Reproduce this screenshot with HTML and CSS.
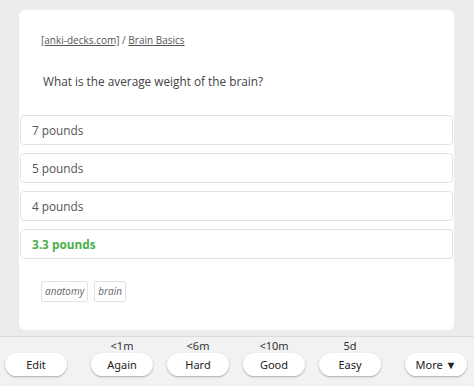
FILE: index.html
```html
<!DOCTYPE html>
<html lang="en">
<head>
    <meta charset="UTF-8">
    <title>Anki Review</title>
    <link rel="stylesheet" href="styles.css">
</head>
<body>
    <div class="page">
        <div class="card">
            <div class="crumbs"><u>[anki-decks.com]</u> / <u>Brain Basics</u></div>
            <div class="question">What is the average weight of the brain?</div>

            <div class="answers">
                <div class="answer">7 pounds</div>
                <div class="answer">5 pounds</div>
                <div class="answer">4 pounds</div>
                <div class="answer correct">3.3 pounds</div>
            </div>

            <div class="tags">
                <span class="tag">anatomy</span>
                <span class="tag">brain</span>
            </div>
        </div>
    </div>

    <div class="bar">
        <div class="col"><button class="btn">Edit</button></div>
        <div class="ease">
            <div class="col"><span class="due">&lt;1m</span><button class="btn">Again</button></div>
            <div class="col"><span class="due">&lt;6m</span><button class="btn">Hard</button></div>
            <div class="col"><span class="due">&lt;10m</span><button class="btn">Good</button></div>
            <div class="col"><span class="due">5d</span><button class="btn">Easy</button></div>
        </div>
        <div class="col"><button class="btn">More &#9660;</button></div>
    </div>
</body>
</html>
```

FILE: styles.css
```css
* {
    margin: 0;
    padding: 0;
    box-sizing: border-box;
}

html, body {
    height: 100%;
}

body {
    font-family: 'Open Sans', 'Noto Sans', sans-serif;
    background: #ececec;
    color: #555;
    display: flex;
    flex-direction: column;
}

.page {
    flex: 1;
    padding: 10px 20px 0 19px;
}

.card {
    background: #fff;
    height: 320px;
    border-radius: 6px;
    padding: 22px 1px 0;
}

.crumbs {
    font-size: 10px;
    line-height: 16px;
    padding-left: 21px;
    color: #555;
}

.question {
    font-size: 11.8px;
    line-height: 18px;
    margin-top: 24px;
    padding-left: 23px;
    color: #444;
}

.answers {
    margin-top: 25px;
    display: flex;
    flex-direction: column;
    gap: 8px;
}

.answer {
    border: 1px solid #e2e2e2;
    border-radius: 4px;
    padding: 0 11px;
    line-height: 28px;
    font-size: 11.8px;
    color: #555;
}

.answer.correct {
    color: #4cae4c;
    font-weight: bold;
}

.tags {
    margin-top: 22px;
    padding-left: 21px;
    display: flex;
    gap: 6px;
}

.tag {
    border: 1px solid #e2e2e2;
    border-radius: 2px;
    font-size: 10px;
    font-style: italic;
    line-height: 19px;
    padding: 0 3px;
    color: #666;
}

.bar {
    height: 50px;
    background: #f2f2f2;
    border-top: 1px solid #dcdcdc;
    display: flex;
    justify-content: space-between;
    align-items: flex-end;
    padding: 0 7px 10px 5px;
}

.ease {
    display: flex;
    gap: 14px;
}

.col {
    display: flex;
    flex-direction: column;
    align-items: center;
}

.due {
    font-size: 11px;
    line-height: 14px;
    color: #333;
    font-family: 'Noto Sans', sans-serif;
}

.btn {
    width: 62px;
    height: 23px;
    border: none;
    border-radius: 12px;
    background: #fff;
    box-shadow: 0 1px 2px rgba(0, 0, 0, 0.3);
    font-family: 'Noto Sans', sans-serif;
    font-size: 11px;
    color: #222;
    cursor: pointer;
}
```
